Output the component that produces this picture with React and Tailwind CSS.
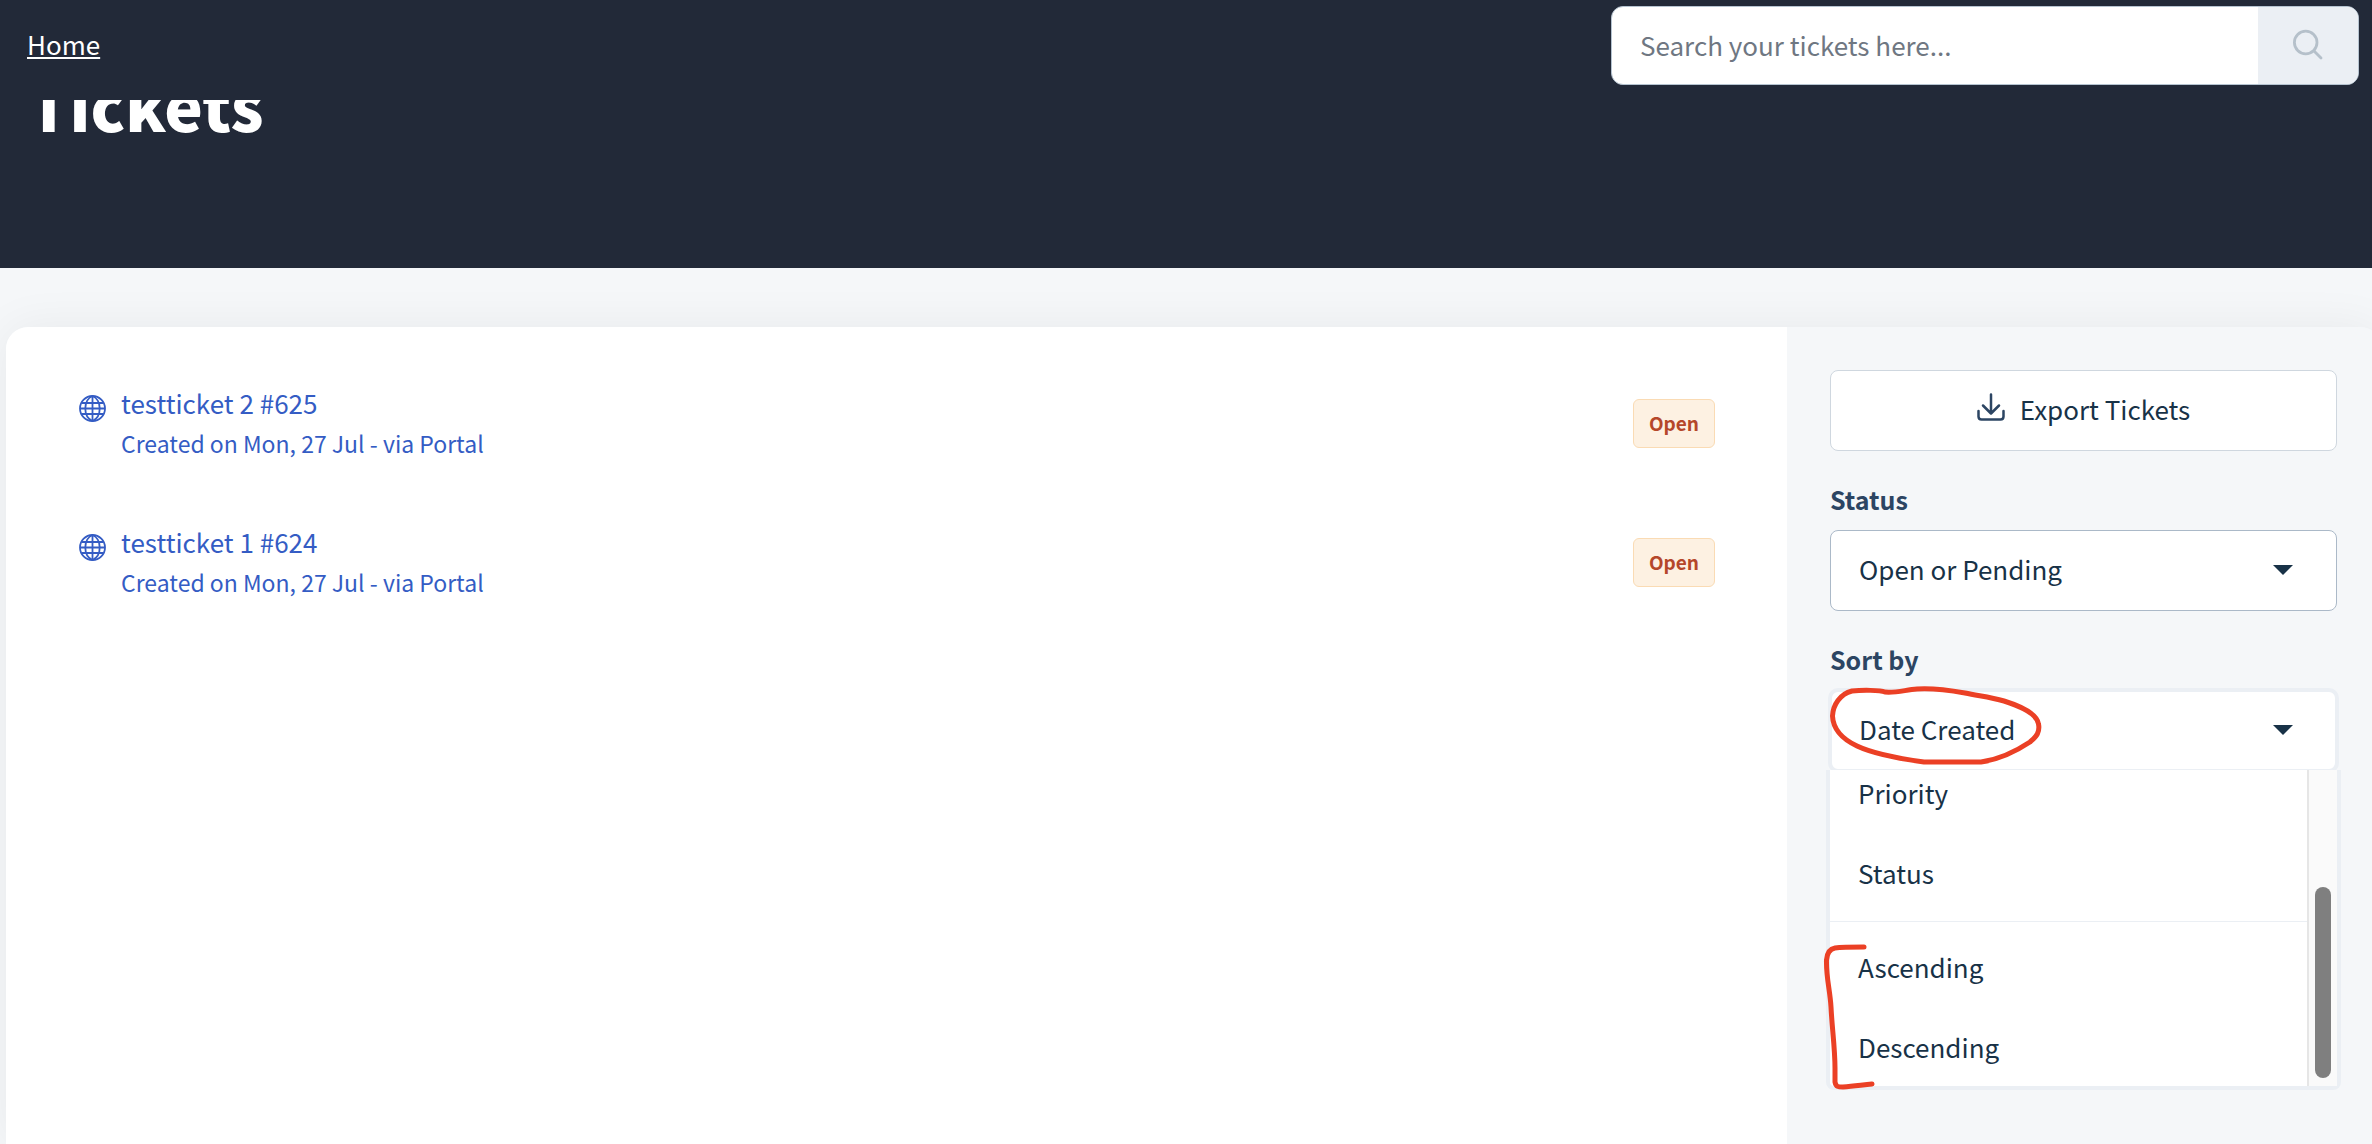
import { useState } from 'react';

const tickets = [
  { id: 625, subject: 'testticket 2', created: 'Mon, 27 Jul', source: 'Portal', status: 'Open' },
  { id: 624, subject: 'testticket 1', created: 'Mon, 27 Jul', source: 'Portal', status: 'Open' },
];

const statusOptions = ['Open or Pending', 'All Tickets', 'Resolved or Closed'];
const sortFields = ['Date Created', 'Last Modified', 'Priority', 'Status'];
const sortOrders = ['Ascending', 'Descending'];

function GlobeIcon() {
  return (
    <svg viewBox="0 0 27 27" className="mt-3 h-[27px] w-[27px] shrink-0" fill="none" stroke="currentColor" strokeWidth="1.8" aria-hidden="true">
      <circle cx="13.5" cy="13.5" r="12.5" />
      <path d="M13.5 1v25M1 13.5h25M3 8h21M3 19h21" />
      <path d="M13.5 1C8.5 3.2 6.3 8 6.3 13.5S8.5 23.8 13.5 26M13.5 1C18.5 3.2 20.7 8 20.7 13.5S18.5 23.8 13.5 26" />
    </svg>
  );
}

function SearchIcon() {
  return (
    <svg viewBox="0 0 32 32" className="mb-1 h-8 w-8" fill="none" stroke="currentColor" strokeWidth="2.8" strokeLinecap="round" aria-hidden="true">
      <circle cx="13.7" cy="14.5" r="11.3" />
      <path d="M22 23L29 30" />
    </svg>
  );
}

function DownloadIcon() {
  return (
    <svg viewBox="0 0 28 28" className="mb-1 h-7 w-7" fill="none" stroke="currentColor" strokeWidth="2.5" strokeLinecap="round" strokeLinejoin="round" aria-hidden="true">
      <path d="M14 1.5V20M6 12.5L14 20.5L22 12.5" />
      <path d="M1.5 18V23.5Q1.5 26.5 4.5 26.5H23.5Q26.5 26.5 26.5 23.5V18" />
    </svg>
  );
}

function Caret() {
  return (
    <svg viewBox="0 0 20 10" className="pointer-events-none absolute right-11 top-[35px] h-[10px] w-5 fill-[#183247]" aria-hidden="true">
      <path d="M0 0h20L10 10z" />
    </svg>
  );
}

function Highlights() {
  return (
    <svg
      viewBox="1820 680 240 420"
      className="pointer-events-none absolute -left-[10px] -top-[10px] z-20 h-[420px] w-[240px]"
      fill="none"
      stroke="#eb4025"
      strokeWidth="5"
      strokeLinecap="round"
      strokeLinejoin="round"
      aria-hidden="true"
    >
      <path d="M1885 692C1880 690 1862 690 1852 691C1840 694 1833 705 1832.5 716C1833 727 1840 738 1857 746C1874 754 1902 759 1924 762H1981C2002 759 2018 750 2030 742C2037 736 2040 732 2038.5 724C2037 714 2020 706 2004 701C1990 697 1979 696 1965 693C1948 690 1931 688 1917 689C1905 690 1896 693 1885 692" />
      <path d="M1864 947C1852 947 1842 947 1835 948C1829 949 1827 954 1826.5 960C1826 977 1830 990 1831 1007C1832 1028 1835 1048 1835 1068V1082C1836 1087 1838 1087 1843 1087C1854 1086 1862 1085 1872 1084" />
    </svg>
  );
}

function TicketRow({ ticket }) {
  return (
    <li className="flex items-start justify-between">
      <a href={`#ticket-${ticket.id}`} className="flex gap-[15px] text-[#345cc4]">
        <GlobeIcon />
        <div className="leading-10">
          <p className="text-[26px]">{ticket.subject} #{ticket.id}</p>
          <p className="text-[23px]">Created on {ticket.created} - via {ticket.source}</p>
        </div>
      </a>
      <span className="mt-4 rounded-md border border-[#fadbb4] bg-[#fdf1e2] px-[15px] pb-[10px] pt-2 text-[19px] font-bold leading-[29px] text-[#b5472a]">
        {ticket.status}
      </span>
    </li>
  );
}

function SortOption({ label, onSelect }) {
  return (
    <li>
      <button type="button" onClick={onSelect} className="flex h-20 w-full items-center px-7 pt-[2px] text-left hover:bg-[#f5f7f9]">
        {label}
      </button>
    </li>
  );
}

export default function App() {
  const [query, setQuery] = useState('');
  const [status, setStatus] = useState('Open or Pending');
  const [sortBy, setSortBy] = useState('Date Created');
  const [, setOrder] = useState('Descending');

  return (
    <div className="flex min-h-screen flex-col overflow-hidden bg-[#f5f7f9] font-['Noto_Sans_CJK_SC','Source_Sans_Pro',sans-serif] text-[26px] leading-9 text-[#183247]">
      <header className="z-10 flex h-[100px] items-start justify-between bg-[#222938] pl-[27px] pr-[13px] pt-[6px]">
        <a href="#home" className="mt-5 text-white underline decoration-2 underline-offset-2">Home</a>
        <form onSubmit={(e) => e.preventDefault()} className="flex h-[79px] w-[748px] overflow-hidden rounded-xl border border-[#b5c3d0] bg-white">
          <input
            type="text"
            aria-label="Search tickets"
            placeholder="Search your tickets here..."
            value={query}
            onChange={(e) => setQuery(e.target.value)}
            className="min-w-0 flex-1 px-7 pb-[2px] outline-none placeholder:text-[#6f7782]"
          />
          <button type="submit" aria-label="Search" className="flex w-[100px] items-center justify-center bg-[#ebeff4] text-[#b5c0ca]">
            <SearchIcon />
          </button>
        </form>
      </header>

      <div className="flex h-[168px] items-start overflow-hidden bg-[#222938] px-7">
        <h1 className="-mt-7 text-[65px] font-black leading-[64px] text-white">Tickets</h1>
      </div>

      <div className="-mr-[10px] ml-[6px] mt-[59px] flex flex-1 rounded-t-[22px] shadow-[0_0_48px_rgba(0,0,0,0.06)]">
        <main className="flex-1 rounded-tl-[22px] bg-white pl-[73px] pr-[72px] pt-14">
          <ul className="flex flex-col gap-[59px]">
            {tickets.map((ticket) => (
              <TicketRow key={ticket.id} ticket={ticket} />
            ))}
          </ul>
        </main>

        <aside className="w-[595px] rounded-tr-[22px] bg-[#f5f7f9] pl-[43px] pr-[45px] pt-[43px]">
          <button type="button" className="flex h-[81px] w-full items-center justify-center gap-[15px] rounded-lg border border-[#cfd7df] bg-white pb-[3px]">
            <span className="text-[#2c4563]"><DownloadIcon /></span>
            Export Tickets
          </button>

          <label htmlFor="status" className="mt-[30px] block text-[25px] font-bold text-[#2c4563]">Status</label>
          <div className="relative mt-[13px]">
            <select
              id="status"
              value={status}
              onChange={(e) => setStatus(e.target.value)}
              className="h-[81px] w-full appearance-none rounded-lg border border-[#abb9c8] bg-white px-7 pb-[3px] outline-none"
            >
              {statusOptions.map((option) => <option key={option}>{option}</option>)}
            </select>
            <Caret />
          </div>

          <label htmlFor="sort" className="mt-[30px] block text-[25px] font-bold text-[#2c4563]">Sort by</label>
          <div className="relative mt-[13px]">
            <select
              id="sort"
              value={sortBy}
              onChange={(e) => setSortBy(e.target.value)}
              className="h-[81px] w-full appearance-none rounded-lg border-2 border-[#ebeff4] bg-white px-[27px] pb-[3px] shadow-[0_0_0_2px_#ebeff4] outline-none"
            >
              {sortFields.map((option) => <option key={option}>{option}</option>)}
            </select>
            <Caret />

            <div className="absolute -left-1 -right-1 top-20 z-10 flex h-[320px] rounded-b-lg border-x-4 border-b-4 border-[#ebeff4] bg-white">
              <ul className="flex flex-1 flex-col justify-end overflow-hidden">
                {sortFields.slice(2).map((field) => (
                  <SortOption key={field} label={field} onSelect={() => setSortBy(field)} />
                ))}
                <li role="separator" className="mb-1 mt-[9px] border-t border-[#ebeff4]" />
                {sortOrders.map((order) => (
                  <SortOption key={order} label={order} onSelect={() => setOrder(order)} />
                ))}
              </ul>
              <div className="flex w-[30px] flex-col justify-end border-l-2 border-[#e6e6e6] bg-[#fafafa] px-[6px] pb-2">
                <div className="h-[191px] rounded-full bg-[#7f7f7f]" />
              </div>
            </div>
            <Highlights />
          </div>
        </aside>
      </div>
    </div>
  );
}
